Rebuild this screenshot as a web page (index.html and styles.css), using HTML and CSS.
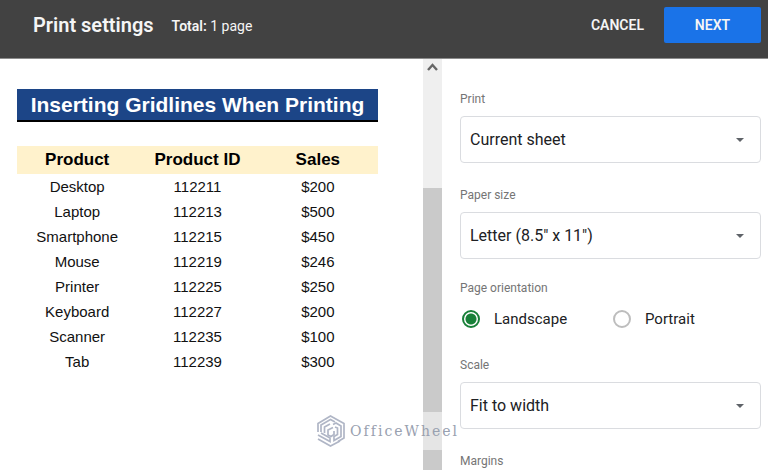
FILE: index.html
```html
<!DOCTYPE html>
<html lang="en">
<head>
    <meta charset="UTF-8">
    <meta name="viewport" content="width=device-width, initial-scale=1.0">
    <title>Print settings</title>
    <link rel="stylesheet" href="styles.css">
</head>
<body>

    <header class="topbar">
        <h1>Print settings</h1>
        <p class="total"><b>Total:</b> 1 page</p>
        <button type="button" class="btn">CANCEL</button>
        <button type="button" class="btn btn-next">NEXT</button>
    </header>

    <main class="layout">
        <section class="preview">
            <h2 class="sheet-title">Inserting Gridlines When Printing</h2>
            <table class="sheet">
                <thead>
                    <tr><th>Product</th><th>Product ID</th><th>Sales</th></tr>
                </thead>
                <tbody>
                    <tr><td>Desktop</td><td>112211</td><td>$200</td></tr>
                    <tr><td>Laptop</td><td>112213</td><td>$500</td></tr>
                    <tr><td>Smartphone</td><td>112215</td><td>$450</td></tr>
                    <tr><td>Mouse</td><td>112219</td><td>$246</td></tr>
                    <tr><td>Printer</td><td>112225</td><td>$250</td></tr>
                    <tr><td>Keyboard</td><td>112227</td><td>$200</td></tr>
                    <tr><td>Scanner</td><td>112235</td><td>$100</td></tr>
                    <tr><td>Tab</td><td>112239</td><td>$300</td></tr>
                </tbody>
            </table>
        </section>

        <div class="scrollbar">
            <svg class="scroll-up" viewBox="0 0 19 18" aria-hidden="true">
                <path d="M5 11 9.500 6 14 11" fill="none" stroke="#666" stroke-width="2.400"/>
            </svg>
            <div class="scroll-thumb"></div>
            <!-- brand mark, floats over the preview and the scrollbar -->
            <div class="watermark">
                <svg class="watermark-logo" viewBox="0 0 30 34" aria-hidden="true">
                    <g fill="none" stroke="#b0b6c6" stroke-width="1.700">
                        <path d="M2 18V9.500L14.500 2 28 9.500V24L22 27.500"/>
                        <path d="M5 18V11l9.500-5.500L19 8"/>
                        <path d="M8.500 19v-6L14 10"/>
                        <path d="M17 10.500 20 9l5 3v10.500l-7 4v-4l3.500-2V14L19 13"/>
                        <path d="M17 13.500 12 16v5l3 1.500 3-2V17"/>
                        <path d="M2 21l12 6.500v-3.500L5 19"/>
                        <path d="M2 25l12.500 7L24 27"/>
                    </g>
                </svg>
                <span>OfficeWheel</span>
            </div>
        </div>

        <form class="settings">
            <div class="field">
                <label for="print">Print</label>
                <select id="print">
                    <option>Current sheet</option>
                    <option>Workbook</option>
                </select>
            </div>
            <div class="field">
                <label for="paper">Paper size</label>
                <select id="paper">
                    <option>Letter (8.5" x 11")</option>
                    <option>A4 (8.27" x 11.69")</option>
                </select>
            </div>
            <fieldset class="orientation">
                <legend>Page orientation</legend>
                <div class="radios">
                    <label><input type="radio" name="orientation" checked>Landscape</label>
                    <label><input type="radio" name="orientation">Portrait</label>
                </div>
            </fieldset>
            <div class="field">
                <label for="scale">Scale</label>
                <select id="scale">
                    <option>Fit to width</option>
                    <option>Fit to page</option>
                </select>
            </div>
            <div class="field">
                <label for="margins">Margins</label>
                <select id="margins">
                    <option>Normal</option>
                    <option>Narrow</option>
                </select>
            </div>
        </form>
    </main>

</body>
</html>
```

FILE: styles.css
```css
* {
    box-sizing: border-box;
}

body {
    margin: 0;
    height: 100vh;
    display: flex;
    flex-direction: column;
    overflow: hidden;
    background: #fff;
    font-family: Roboto, "Liberation Sans", sans-serif;
    color: #202124;
}

h1, h2, p {
    margin: 0;
}

/* top bar */
.topbar {
    display: flex;
    align-items: center;
    flex-shrink: 0;
    padding: 7px 7px 15px 33px;
    background: #424242;
    border-bottom: 1px solid #8c8c8c;
    color: #f5f5f5;
}

.topbar h1 {
    font-size: 20px;
    line-height: 24px;
    font-weight: 600;
}

.total {
    flex: 1;
    margin-left: 18px;
    padding-top: 2px;
    font-size: 14px;
    line-height: 20px;
}

.total b {
    font-weight: 600;
}

.btn {
    height: 36px;
    padding: 0 20px;
    border: 0;
    border-radius: 2px;
    background: none;
    color: #f5f5f5;
    font: 600 14px/20px Roboto, sans-serif;
}

.btn-next {
    width: 97px;
    background: #1a73e8;
}

/* columns */
.layout {
    flex: 1;
    min-height: 0;
    display: grid;
    grid-template-columns: 1fr 19px 326px;
}

.preview {
    padding: 30px 45px 0 17px;
    font-family: "Liberation Sans", Arial, sans-serif;
    color: #000;
}

.sheet-title {
    margin-bottom: 24px;
    border-bottom: 2px solid #000;
    background: #1c4587;
    color: #fff;
    font-size: 21px;
    line-height: 31px;
    text-align: center;
}

.sheet {
    width: 100%;
    table-layout: fixed;
    border-collapse: collapse;
    text-align: center;
}

.sheet th {
    height: 28px;
    padding: 0;
    background: #fff2cc;
    font-size: 17px;
}

.sheet td {
    height: 25px;
    padding: 0;
    font-size: 15px;
    color: #111;
}

/* preview scrollbar */
.scrollbar {
    position: relative;
    display: flex;
    flex-direction: column;
    background: #efefef;
}

.scroll-up {
    height: 18px;
    margin-bottom: 111px;
}

.scroll-thumb {
    flex: 1;
    background: #cacaca;
}

.watermark {
    position: absolute;
    right: -17px;
    bottom: 20px;
    height: 38px;
    padding-left: 5px;
    display: flex;
    align-items: center;
    gap: 4px;
    background: rgba(255, 255, 255, 0.5);
    color: #99a1b0;
    font: 14px/20px "DejaVu Serif", serif;
    letter-spacing: 2px;
}

.watermark-logo {
    width: 30px;
    height: 34px;
}

/* settings */
.settings {
    padding: 32px 7px 0 18px;
    overflow: hidden;
}

.field {
    display: flex;
    flex-direction: column;
    gap: 9px;
    margin-bottom: 24px;
}

.field label, .orientation legend {
    padding: 0;
    font-size: 12px;
    line-height: 16px;
    color: #757575;
}

.field select {
    height: 47px;
    padding: 0 9px;
    border: 1px solid #dadce0;
    border-radius: 4px;
    appearance: none;
    background: #fff url("data:image/svg+xml,%3Csvg xmlns='http://www.w3.org/2000/svg' width='8' height='4'%3E%3Cpath d='M0 0h8L4 4z' fill='%235f6368'/%3E%3C/svg%3E") no-repeat right 16px center;
    color: #202124;
    font: 16px/24px Roboto, sans-serif;
}

.orientation {
    margin: -3px 0 27px;
    padding: 0;
    border: 0;
}

.radios {
    display: flex;
    margin-top: 12px;
}

.radios label {
    display: flex;
    align-items: center;
    flex: 0 0 151px;
    font-size: 15px;
    line-height: 22px;
}

.radios input {
    width: 18px;
    height: 18px;
    margin: 0 14px 0 2px;
    border: 2px solid #bdbdbd;
    border-radius: 50%;
    appearance: none;
}

.radios input:checked {
    border-color: #188038;
    background: radial-gradient(circle, #188038 5px, #fff 6px);
}
```
